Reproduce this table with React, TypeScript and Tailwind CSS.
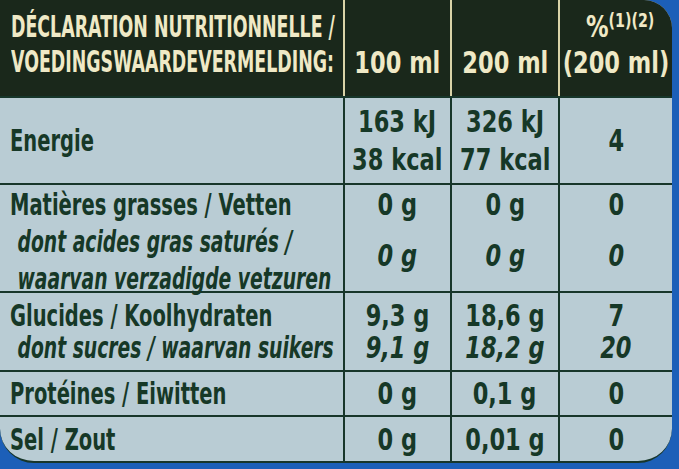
import React from "react";

const font = { fontFamily: '"DejaVu Sans", "Liberation Sans", sans-serif' };
const cols = "grid grid-cols-[343px_107px_108px_114px]";

// condensed text: DejaVu Sans Bold squeezed horizontally
function L({ children }: { children: React.ReactNode }) {
  return <span className="block whitespace-nowrap origin-left [transform:scaleX(0.65)]">{children}</span>;
}
function I({ children }: { children: React.ReactNode }) {
  return <span className="block whitespace-nowrap italic pl-[12px] origin-left [transform:scaleX(0.625)]">{children}</span>;
}
function H({ children }: { children: React.ReactNode }) {
  return <span className="block whitespace-nowrap origin-left [transform:scaleX(0.58)]">{children}</span>;
}
function C({ children, className = "" }: { children: React.ReactNode; className?: string }) {
  return <span className={`block whitespace-nowrap origin-center [transform:scaleX(0.75)] ${className}`}>{children}</span>;
}

function Cell({ children, className = "" }: { children: React.ReactNode; className?: string }) {
  return (
    <div className={`flex flex-col items-center justify-center border-l-2 border-[#17362a] ${className}`}>{children}</div>
  );
}

export default function App() {
  return (
    <div className="w-[679px] h-[469px] bg-[#1c5fb8] overflow-hidden" style={font}>
      <div className="w-[672px] h-[463px] bg-[#b9ccd4] rounded-tr-[28px] rounded-br-[34px] rounded-bl-[34px] overflow-hidden border-b-2 border-[#17362a] font-bold text-[#163827] text-[30px]">
        {/* header */}
        <div className={`${cols} h-[96px] bg-[#1a281b] text-[#efe9c6] leading-[35px]`}>
          <div className="flex flex-col justify-center pl-[11px] pb-[8px]">
            <H>DÉCLARATION NUTRITIONNELLE /</H>
            <H>VOEDINGSWAARDEVERMELDING:</H>
          </div>
          <div className="border-l-2 border-[#d9d3a8] flex items-end justify-center pb-[16px]">
            <C>100 ml</C>
          </div>
          <div className="border-l-2 border-[#d9d3a8] flex items-end justify-center pb-[16px]">
            <C>200 ml</C>
          </div>
          <div className="border-l-2 border-[#d9d3a8] flex flex-col items-center justify-end pb-[16px]">
            <C className="leading-[30px] pl-[12px]">
              %<span className="text-[19px] relative -top-[10px]">(1)(2)</span>
            </C>
            <C>(200 ml)</C>
          </div>
        </div>

        {/* Energie */}
        <div className={`${cols} h-[87px] border-t-2 border-[#17362a] leading-[38px]`}>
          <div className="flex items-center pl-[10px]"><L>Energie</L></div>
          <Cell><C>163 kJ</C><C>38 kcal</C></Cell>
          <Cell><C>326 kJ</C><C>77 kcal</C></Cell>
          <Cell><C>4</C></Cell>
        </div>

        {/* Matières grasses */}
        <div className={`${cols} h-[108px] border-t-2 border-[#17362a] leading-[37px]`}>
          <div className="flex flex-col pl-[10px] pt-[1px]">
            <L>Matières grasses / Vetten</L>
            <I>dont acides gras saturés /</I>
            <I>waarvan verzadigde vetzuren</I>
          </div>
          <Cell className="justify-start pt-[1px]">
            <C>0 g</C>
            <C className="italic leading-[58px] mt-[4px]">0 g</C>
          </Cell>
          <Cell className="justify-start pt-[1px]">
            <C>0 g</C>
            <C className="italic leading-[58px] mt-[4px]">0 g</C>
          </Cell>
          <Cell className="justify-start pt-[1px]">
            <C>0</C>
            <C className="italic leading-[58px] mt-[4px]">0</C>
          </Cell>
        </div>

        {/* Glucides */}
        <div className={`${cols} h-[79px] border-t-2 border-[#17362a] leading-[32px]`}>
          <div className="flex flex-col justify-center pl-[10px]">
            <L>Glucides / Koolhydraten</L>
            <I>dont sucres / waarvan suikers</I>
          </div>
          <Cell><C>9,3 g</C><C className="italic">9,1 g</C></Cell>
          <Cell><C>18,6 g</C><C className="italic">18,2 g</C></Cell>
          <Cell><C>7</C><C className="italic">20</C></Cell>
        </div>

        {/* Protéines */}
        <div className={`${cols} h-[45px] border-t-2 border-[#17362a] leading-[36px]`}>
          <div className="flex items-center pl-[10px]"><L>Protéines / Eiwitten</L></div>
          <Cell><C>0 g</C></Cell>
          <Cell><C>0,1 g</C></Cell>
          <Cell><C>0</C></Cell>
        </div>

        {/* Sel */}
        <div className={`${cols} h-[47px] border-t-2 border-[#17362a] leading-[36px]`}>
          <div className="flex items-center pl-[10px]"><L>Sel / Zout</L></div>
          <Cell><C>0 g</C></Cell>
          <Cell><C>0,01 g</C></Cell>
          <Cell><C>0</C></Cell>
        </div>
      </div>
    </div>
  );
}
